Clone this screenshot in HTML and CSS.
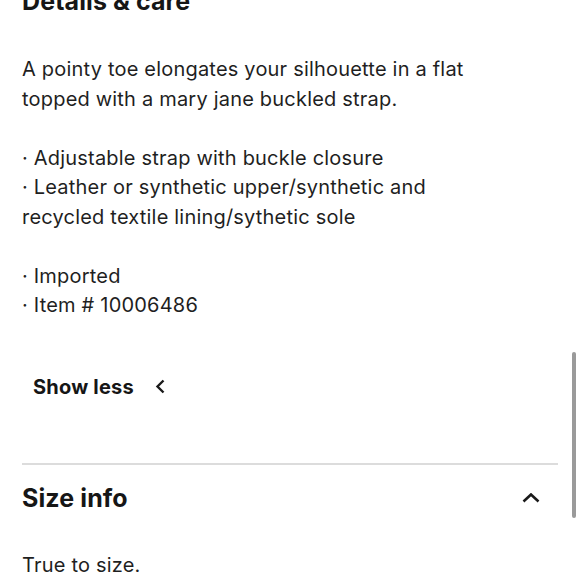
FILE: index.html
```html
<!DOCTYPE html>
<html lang="en">
  <head>
    <meta charset="UTF-8" />
    <meta name="viewport" content="width=device-width, initial-scale=1.0" />
    <title>Details &amp; care</title>
    <link rel="stylesheet" href="styles.css">
  </head>
  <body>
    <div class="page">
      <section class="details">
        <h2 class="section-title">Details &amp; care</h2>
        <p class="copy">A pointy toe elongates your silhouette in a flat<br>topped with a mary jane buckled strap.</p>
        <p class="copy">&middot; Adjustable strap with buckle closure<br>&middot; Leather or synthetic upper/synthetic and<br>recycled textile lining/sythetic sole</p>
        <p class="copy">&middot; Imported<br>&middot; Item # 10006486</p>
        <button class="toggle">
          Show less
          <svg width="11" height="15" viewBox="0 0 11 15">
            <path d="M8.5 1.5 L2.5 7.5 L8.5 13.5" fill="none" stroke="#1a1a1a" stroke-width="2.4" />
          </svg>
        </button>
      </section>

      <section class="size">
        <div class="size-head">
          <h2 class="section-title">Size info</h2>
          <svg width="18" height="10" viewBox="0 0 18 10">
            <path d="M1.5 8.5 L9 1.5 L16.5 8.5" fill="none" stroke="#1a1a1a" stroke-width="2.6" />
          </svg>
        </div>
        <p class="copy">True to size.</p>
      </section>
    </div>

    <div class="scrollbar"></div>
  </body>
</html>
```

FILE: styles.css
```css
html,
body {
  margin: 0;
  background: #fff;
  color: #1f1f1f;
  font-family: Inter, "Liberation Sans", sans-serif;
  overflow: hidden;
}

.page {
  padding: 0 22px;
}

.section-title {
  margin: 0;
  font-size: 25px;
  line-height: 30px;
  font-weight: 700;
  letter-spacing: 0.1px;
  color: #161616;
}

.details .section-title {
  margin-top: -14px;
}

.copy {
  margin: 0;
  font-size: 20px;
  line-height: 29.5px;
  letter-spacing: 0.2px;
}

.details .copy:first-of-type {
  margin-top: 39px;
}

.details .copy + .copy {
  margin-top: 29.5px;
}

.toggle {
  display: flex;
  align-items: center;
  gap: 21px;
  margin: 54px 0 0;
  padding: 0 11px;
  border: none;
  background: none;
  font-family: inherit;
  font-size: 20px;
  line-height: 24px;
  font-weight: 700;
  letter-spacing: 0.2px;
  color: #161616;
}

.size {
  margin-top: 64px;
  border-top: 2px solid #dcdcdc;
}

.size-head {
  display: flex;
  align-items: center;
  justify-content: space-between;
  padding: 18px 18px 0 0;
}

.size .copy {
  margin-top: 38px;
}

/* overlay scrollbar thumb */
.scrollbar {
  position: absolute;
  top: 352px;
  left: 572px;
  width: 4px;
  height: 166px;
  border-radius: 2px;
  background: #9a9a9a;
}
```
